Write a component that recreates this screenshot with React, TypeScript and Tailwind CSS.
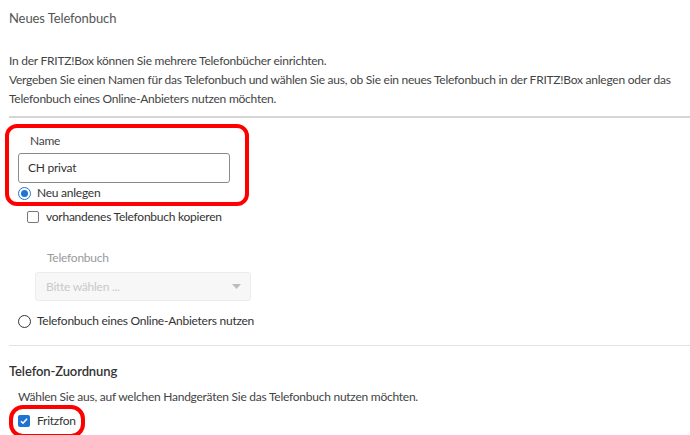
import React from "react";

const font = { fontFamily: "Lato, 'Noto Sans', sans-serif" };

function Radio({ checked }: { checked?: boolean }) {
  return checked ? (
    <span className="w-[13px] h-[13px] rounded-full border-[1.5px] border-[#1f73d2] flex items-center justify-center shrink-0">
      <span className="w-[7px] h-[7px] rounded-full bg-[#1f73d2]" />
    </span>
  ) : (
    <span className="w-[13px] h-[13px] rounded-full border-[1.5px] border-[#333] shrink-0" />
  );
}

export default function App() {
  return (
    <div
      className="relative w-[690px] h-[435px] overflow-hidden bg-white text-[#333] text-[12px] tracking-[-0.25px] pl-[9px]"
      style={font}
    >
      <div className="pt-[9px] text-[13px] leading-[18px] text-[#555] tracking-[-0.1px]">Neues Telefonbuch</div>
      <div className="mt-[24px] leading-[19px] text-[#444]">
        <p>In der FRITZ!Box können Sie mehrere Telefonbücher einrichten.</p>
        <p>
          Vergeben Sie einen Namen für das Telefonbuch und wählen Sie aus, ob Sie ein neues Telefonbuch in der
          FRITZ!Box anlegen oder das
          <br />
          Telefonbuch eines Online-Anbieters nutzen möchten.
        </p>
      </div>
      <div className="mt-[8px] border-t-2 border-[#d6d6d6]" />

      <div className="mt-[15px] ml-[21px] leading-[16px] text-[#444]">Name</div>
      <div className="mt-[4px] ml-[9px] w-[212px] h-[30px] border border-[#8a8a8a] rounded-[3px] flex items-center pl-[9px] text-[#333]">
        CH privat
      </div>
      <div className="ml-[9px] h-[20px] flex items-center gap-[6px]">
        <Radio checked />
        <span>Neu anlegen</span>
      </div>
      <div className="mt-[4px] ml-[18px] h-[20px] flex items-center gap-[7px]">
        <span className="w-[12px] h-[12px] border border-[#777] rounded-[2px] shrink-0" />
        <span>vorhandenes Telefonbuch kopieren</span>
      </div>

      <div className="mt-[23px] ml-[38px] leading-[16px] text-[#9a9a9a]">Telefonbuch</div>
      <div className="mt-[6px] ml-[26px] w-[216px] h-[29px] bg-[#f7f7f7] border border-[#ececec] rounded-[3px] flex items-center justify-between pl-[10px] pr-[9px] text-[#c9c9c9]">
        <span>Bitte wählen ...</span>
        <svg width="9" height="5" viewBox="0 0 9 5">
          <path d="M0 0h9L4.5 5z" fill="#bdbdbd" />
        </svg>
      </div>
      <div className="mt-[10px] ml-[9px] h-[20px] flex items-center gap-[6px]">
        <Radio />
        <span>Telefonbuch eines Online-Anbieters nutzen</span>
      </div>
      <div className="mt-[14px] border-t border-[#e3e3e3]" />

      <div className="mt-[16px] text-[13px] leading-[18px] font-semibold text-[#333] tracking-[-0.1px]">Telefon-Zuordnung</div>
      <div className="mt-[8px] ml-[9px] leading-[18px] text-[#444]">
        Wählen Sie aus, auf welchen Handgeräten Sie das Telefonbuch nutzen möchten.
      </div>
      <div className="mt-[8px] ml-[9px] h-[14px] flex items-center gap-[7px]">
        <span className="w-[12px] h-[12px] rounded-[2px] bg-[#1f73d2] flex items-center justify-center shrink-0">
          <svg width="10" height="10" viewBox="0 0 10 10">
            <path d="M2 5.2l2 2 4-4.4" stroke="white" strokeWidth="1.6" fill="none" />
          </svg>
        </span>
        <span>Fritzfon</span>
      </div>

      <div className="absolute left-[5px] top-[124px] w-[244px] h-[82px] border-[4.5px] border-[#ff0000] rounded-[12px] pointer-events-none" />
      <div className="absolute left-[9px] top-[405px] w-[76px] h-[33px] border-[4.5px] border-[#ff0000] rounded-[14px] pointer-events-none" />
    </div>
  );
}
